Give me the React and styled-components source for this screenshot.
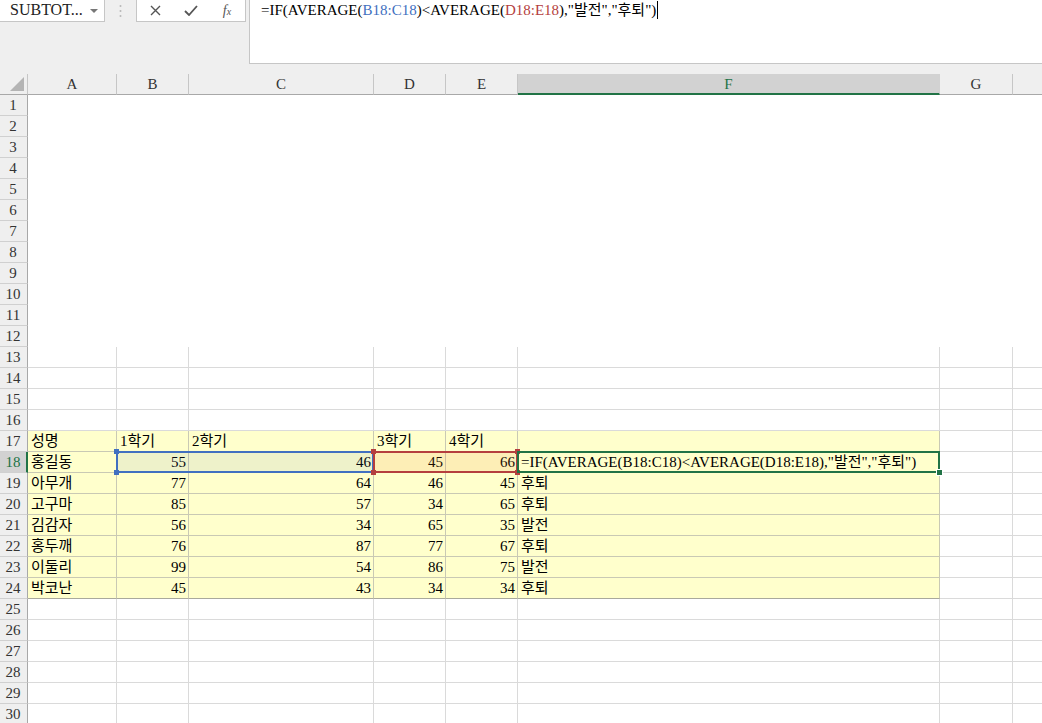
import styled, { createGlobalStyle, css } from "styled-components";

const GlobalStyle = createGlobalStyle`
  html, body {
    margin: 0;
    padding: 0;
    background: #fff;
    overflow: hidden;
  }
  body {
    font-family: "Liberation Serif", "Noto Sans CJK KR", serif;
    color: #000;
  }
`;

const GREEN = "#217346";
const BLUE = "#4170c0";
const RED = "#b53f3e";
const YELLOW = "#ffffcc";

const FORMULA = '=IF(AVERAGE(B18:C18)<AVERAGE(D18:E18),"발전","후퇴")';

const Page = styled.div`
  width: 1042px;
  height: 723px;
  overflow: hidden;
  background: #fff;
  font-family: "Liberation Serif", "Noto Sans CJK KR", serif;
`;

/* formula bar */
const TopBar = styled.div`
  height: 74px;
  background: #efefef;
  display: flex;
  align-items: flex-start;
`;

const NameBox = styled.div`
  width: 105px;
  height: 22px;
  box-sizing: border-box;
  background: #fff;
  border: 1px solid #c6c6c6;
  border-top: none;
  border-left: none;
  display: flex;
  align-items: center;
  justify-content: space-between;
  padding: 0 6px 1px 10px;
  font-size: 16px;
  color: #222;
`;

const Caret = styled.span`
  width: 0;
  height: 0;
  border-left: 4px solid transparent;
  border-right: 4px solid transparent;
  border-top: 4px solid #777;
  margin-top: 2px;
`;

const Grip = styled.div`
  width: 31px;
  height: 22px;
  display: flex;
  align-items: center;
  justify-content: center;
`;

const FxBox = styled.div`
  width: 110px;
  height: 22px;
  box-sizing: border-box;
  background: #fff;
  border: 1px solid #c6c6c6;
  border-top: none;
  display: flex;
  align-items: center;
`;

const IconSlot = styled.div`
  width: 36px;
  height: 21px;
  display: flex;
  align-items: center;
  justify-content: center;
  color: #555;
  font-style: italic;
  font-size: 14px;
`;

const FormulaBox = styled.div`
  flex: 1;
  height: 64px;
  margin-left: 3px;
  box-sizing: border-box;
  background: #fff;
  border: 1px solid #c6c6c6;
  border-top: none;
  border-right: none;
  padding: 0 0 0 11px;
  font-size: 15px;
  line-height: 21px;
  white-space: nowrap;
`;

const Ref = styled.span`
  color: ${({ $color }) => $color};
`;

const Cursor = styled.span`
  display: inline-block;
  width: 1px;
  height: 18px;
  background: #000;
  vertical-align: -4px;
  margin-left: 1px;
`;

/* sheet */
const Sheet = styled.div`
  display: grid;
  grid-template-columns: 28px 89px 72px 185px 72px 72px 422px 73px 73px;
  grid-template-rows: repeat(31, 21px);
  font-size: 15px;
`;

const headBase = css`
  background: #efefef;
  box-sizing: border-box;
  display: flex;
  align-items: center;
  justify-content: center;
  color: #333;
  font-size: 15px;
`;

const Corner = styled.div`
  ${headBase};
  grid-row: 1;
  grid-column: 1;
  border-right: 1px solid #c6c6c6;
  border-bottom: 1px solid #a8a8a8;
  position: relative;
  &:after {
    content: "";
    position: absolute;
    right: 3px;
    bottom: 3px;
    width: 0;
    height: 0;
    border-left: 14px solid transparent;
    border-bottom: 14px solid #b4b4b4;
  }
`;

const ColHead = styled.div`
  ${headBase};
  grid-row: 1;
  grid-column: ${({ $c }) => $c};
  border-right: 1px solid #c6c6c6;
  border-bottom: 1px solid #a8a8a8;
  ${({ $active }) =>
    $active &&
    css`
      background: #d2d2d2;
      color: ${GREEN};
      border-right-color: #d2d2d2;
      border-bottom: 2px solid ${GREEN};
      padding-top: 1px;
    `}
`;

const RowHead = styled.div`
  ${headBase};
  grid-row: ${({ $r }) => $r + 1};
  grid-column: 1;
  border-right: 1px solid #a8a8a8;
  border-bottom: 1px solid #d0d0d0;
  padding-right: 1px;
  ${({ $active }) =>
    $active &&
    css`
      background: #d2d2d2;
      color: ${GREEN};
      border-right: 2px solid ${GREEN};
      padding-right: 0;
    `}
`;

const Cell = styled.div`
  grid-row: ${({ $r }) => $r + 1};
  grid-column: ${({ $c }) => $c + 1};
  box-sizing: border-box;
  background: ${({ $fill }) => ($fill ? YELLOW : "#fff")};
  border-right: 1px solid ${({ $fill }) => ($fill ? "#c9c9b4" : "#dadada")};
  border-bottom: 1px solid ${({ $fill }) => ($fill ? "#c9c9b4" : "#dadada")};
  ${({ $blank }) =>
    $blank &&
    css`
      border-color: #fff;
    `}
  ${({ $last }) =>
    $last &&
    css`
      border-bottom-color: #a9a99c;
    `}
  padding: 0 3px;
  line-height: 20px;
  white-space: nowrap;
  text-align: ${({ $num }) => ($num ? "right" : "left")};
  ${({ $num }) =>
    $num &&
    css`
      padding: 0 2px 0 0;
    `}
`;

const Range = styled.div`
  grid-row: ${({ $r }) => $r + 1};
  grid-column: ${({ $c1, $c2 }) => `${$c1 + 1} / ${$c2 + 2}`};
  margin: -1px 0 0 -1px;
  border: 2px solid ${({ $color }) => $color};
  background: ${({ $tint }) => $tint || "transparent"};
  position: relative;
  z-index: 2;
  pointer-events: none;
`;

const Handle = styled.span`
  position: absolute;
  width: 5px;
  height: 5px;
  background: ${({ $color }) => $color};
  ${({ $pos }) => ($pos.includes("t") ? "top: -4px;" : "bottom: -4px;")}
  ${({ $pos }) => ($pos.includes("l") ? "left: -4px;" : "right: -4px;")}
`;

const FillHandle = styled.span`
  position: absolute;
  right: -5px;
  bottom: -5px;
  width: 5px;
  height: 5px;
  background: ${GREEN};
  border: 1px solid #fff;
`;

// H is cut off at the right edge, so its header stays empty
const letters = ["A", "B", "C", "D", "E", "F", "G", ""];

const data = [
  ["성명", "1학기", "2학기", "3학기", "4학기", ""],
  ["홍길동", 55, 46, 45, 66, FORMULA],
  ["아무개", 77, 64, 46, 45, "후퇴"],
  ["고구마", 85, 57, 34, 65, "후퇴"],
  ["김감자", 56, 34, 65, 35, "발전"],
  ["홍두깨", 76, 87, 77, 67, "후퇴"],
  ["이둘리", 99, 54, 86, 75, "발전"],
  ["박코난", 45, 43, 34, 34, "후퇴"],
];

function Corners({ color }) {
  return ["tl", "tr", "bl", "br"].map((p) => <Handle key={p} $pos={p} $color={color} />);
}

function App() {
  const rows = Array.from({ length: 30 }, (_, i) => i + 1);
  const cells = [];
  rows.forEach((r) => {
    for (let c = 1; c <= 8; c++) {
      const inData = r >= 17 && r <= 24 && c <= 6;
      const value = inData ? data[r - 17][c - 1] : "";
      cells.push(
        <Cell
          key={`${r}-${c}`}
          $r={r}
          $c={c}
          $fill={inData}
          $blank={r <= 12}
          $last={inData && r === 24}
          $num={typeof value === "number"}
        >
          {value}
        </Cell>
      );
    }
  });

  return (
    <Page>
      <GlobalStyle />
      <TopBar>
        <NameBox>
          <span>SUBTOT...</span>
          <Caret />
        </NameBox>
        <Grip>
          <svg width="3" height="14" viewBox="0 0 3 14">
            <circle cx="1.5" cy="2" r="1" fill="#b8b8b8" />
            <circle cx="1.5" cy="7" r="1" fill="#b8b8b8" />
            <circle cx="1.5" cy="12" r="1" fill="#b8b8b8" />
          </svg>
        </Grip>
        <FxBox>
          <IconSlot>
            <svg width="11" height="11" viewBox="0 0 11 11">
              <path d="M1 1L10 10M10 1L1 10" stroke="#555" strokeWidth="1.4" />
            </svg>
          </IconSlot>
          <IconSlot>
            <svg width="14" height="11" viewBox="0 0 14 11">
              <path d="M1 6L5 10L13 1" stroke="#555" strokeWidth="1.8" fill="none" />
            </svg>
          </IconSlot>
          <IconSlot>
            <span>
              f<small style={{ fontSize: "10px" }}>x</small>
            </span>
          </IconSlot>
        </FxBox>
        <FormulaBox>
          =IF(AVERAGE(<Ref $color={BLUE}>B18:C18</Ref>)&lt;AVERAGE(
          <Ref $color={RED}>D18:E18</Ref>),"발전","후퇴")
          <Cursor />
        </FormulaBox>
      </TopBar>

      <Sheet>
        <Corner />
        {letters.map((l, i) => (
          <ColHead key={i} $c={i + 2} $active={l === "F"}>
            {l}
          </ColHead>
        ))}
        {rows.map((r) => (
          <RowHead key={r} $r={r} $active={r === 18}>
            {r}
          </RowHead>
        ))}
        {cells}
        <Range $r={18} $c1={2} $c2={3} $color={BLUE} $tint="rgba(65,112,192,0.09)">
          <Corners color={BLUE} />
        </Range>
        <Range $r={18} $c1={4} $c2={5} $color={RED} $tint="rgba(240,120,40,0.13)">
          <Corners color={RED} />
        </Range>
        <Range $r={18} $c1={6} $c2={6} $color={GREEN}>
          <FillHandle />
        </Range>
      </Sheet>
    </Page>
  );
}

export default App;
